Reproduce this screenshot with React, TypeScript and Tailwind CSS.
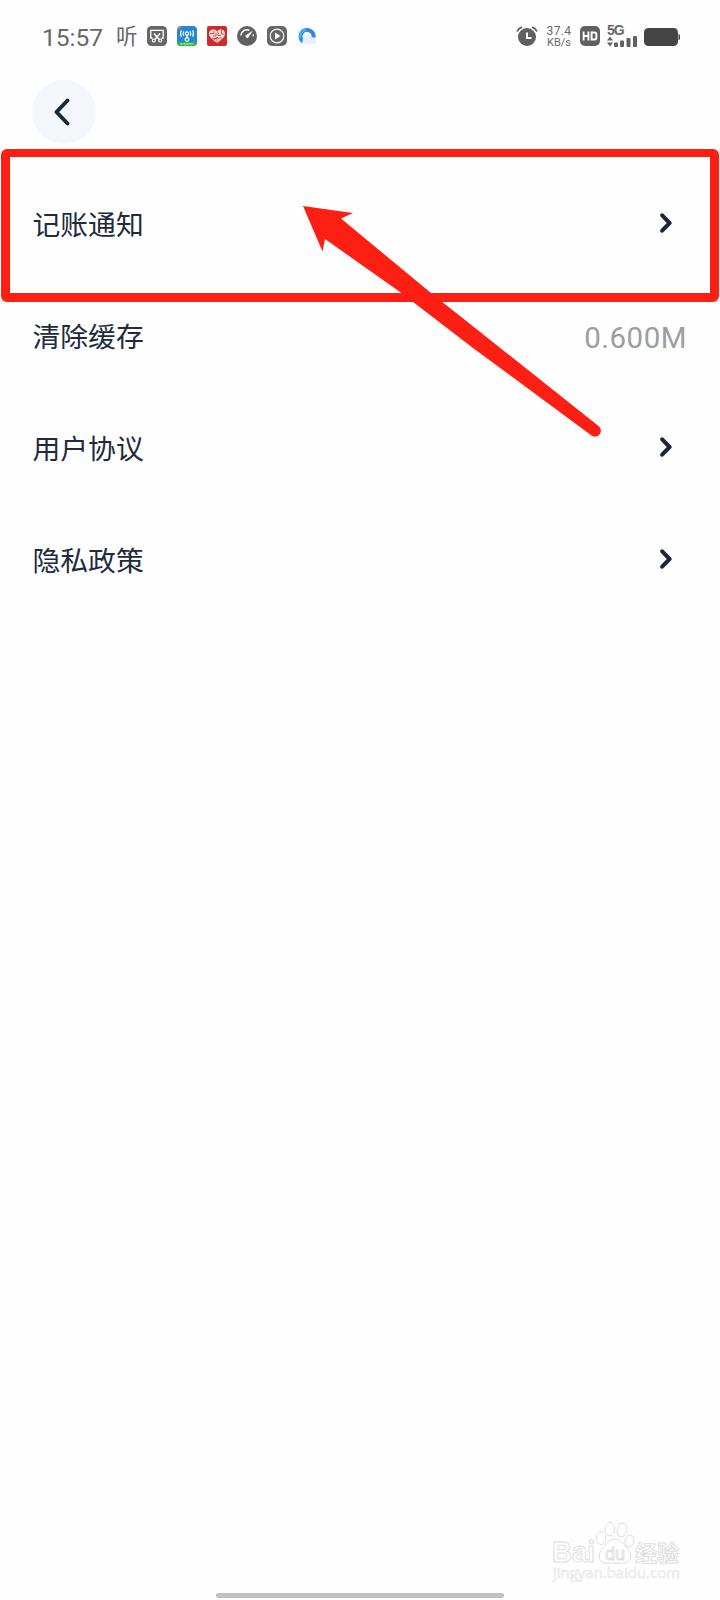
import type { ReactNode } from 'react';

interface SettingItem {
  label: string;
  value?: string;
}

const settings: SettingItem[] = [
  { label: '记账通知' },
  { label: '清除缓存', value: '0.600M' },
  { label: '用户协议' },
  { label: '隐私政策' },
];

function StatusIcon({ children }: { children: ReactNode }) {
  return (
    <svg className="w-5 h-5 shrink-0" viewBox="0 0 20 20" fill="none">
      {children}
    </svg>
  );
}

function StatusBar() {
  return (
    <div className="h-[72px] pl-[42px] pr-[39px] flex items-center justify-between text-[#686868]">
      <div className="flex items-center">
        <span className="w-[74px] text-[24.5px] leading-6 font-[Roboto,sans-serif] mt-[3px]">15:57</span>
        <span className="w-[31px] text-[21.5px] leading-5 font-['Noto_Sans_CJK_SC',sans-serif] -mt-[3px]">听</span>
        <div className="flex items-center gap-2.5">
          {/* Screenshot */}
          <StatusIcon>
            <rect width="20" height="20" rx="4.5" fill="#666" />
            <path d="M5.500 12H3.800V4.300h12.400V12h-1.700" stroke="#fff" strokeWidth="1.3" />
            <path d="M7 7.500l5.200 6M13 7.500l-5.200 6" stroke="#fff" strokeWidth="1.5" />
            <circle cx="6.800" cy="14.500" r="1.500" stroke="#fff" strokeWidth="1.2" />
            <circle cx="13.200" cy="14.500" r="1.500" stroke="#fff" strokeWidth="1.2" />
          </StatusIcon>
          {/* Wifi key */}
          <StatusIcon>
            <defs>
              <clipPath id="wifi-key">
                <rect width="20" height="20" rx="4" />
              </clipPath>
            </defs>
            <g clipPath="url(#wifi-key)">
              <rect width="20" height="20" fill="#2688d4" />
              <rect y="15.8" width="20" height="4.2" fill="#35b44a" />
              <path d="M0 0h5L0 4z" fill="#d98a8a" />
            </g>
            <circle cx="10" cy="7.5" r="1.7" stroke="#fff" strokeWidth="1.2" />
            <path d="M10 9.2v3" stroke="#fff" strokeWidth="1.3" />
            <circle cx="10" cy="13.5" r="1.8" stroke="#fff" strokeWidth="1.2" />
            <path d="M6.8 5.2q-1.3 2.3 0 4.6M13.2 5.2q1.3 2.3 0 4.6M4.4 4.3q-1.8 3.2 0 6.4M15.6 4.3q1.8 3.2 0 6.4" stroke="#fff" strokeWidth="1.1" />
            <path d="M3.5 18h13" stroke="#b9ebbb" strokeWidth="1.3" strokeDasharray="2 1" />
          </StatusIcon>
          {/* Heart */}
          <StatusIcon>
            <rect width="20" height="20" rx="2" fill="#cd2c2c" />
            <path d="M10 16.7C4.5 13 2 10.6 2 7.4 2 3 8 2.4 10 5.4 12 2.4 18 3 18 7.4c0 3.2-2.5 5.6-8 9.3z" fill="#f8dddd" />
            <path d="M3 7.5h4V5M6 10h3V7M5 12.5h5v3M11 5.5v4h3M12 12h3M14.5 4v4h3M7 14l3-3 2 2" stroke="#cd2c2c" strokeWidth=".8" />
          </StatusIcon>
          {/* Gauge */}
          <StatusIcon>
            <circle cx="10" cy="10" r="10" fill="#606060" />
            <path d="M3.8 9.5A6.3 6.3 0 0 1 12.5 4.2" stroke="#fff" strokeWidth="1.5" />
            <path d="M16 4.5L11.3 11.6A1.8 1.8 0 0 1 8.6 9.4z" fill="#fff" />
            <path d="M16.2 8v2.5" stroke="#fff" strokeWidth="1" />
          </StatusIcon>
          {/* Player */}
          <StatusIcon>
            <rect width="20" height="20" rx="5" fill="#666" />
            <circle cx="10" cy="10" r="6.8" stroke="#fff" strokeWidth="1.2" />
            <path d="M8 6.5v7l5.5-3.5z" fill="#fff" />
          </StatusIcon>
          {/* Browser */}
          <StatusIcon>
            <rect x="1" y="1" width="18" height="18" rx="3" fill="#f4f8fe" />
            <path d="M6 15.500A6.500 6.500 0 1 1 16.500 11.500" stroke="#2d86d9" strokeWidth="4" />
            <path d="M3.3 12A7 7 0 0 1 9 3.6" stroke="#3fb1ee" strokeWidth="2.4" />
            <path d="M8.500 17.500a3 3 0 0 1 0-6 4 4 0 0 1 7 .5 2.800 2.800 0 0 1 1 5.500z" fill="#e5eefc" />
          </StatusIcon>
        </div>
      </div>

      <div className="flex items-center">
        {/* Alarm */}
        <svg className="w-[22px] h-5" viewBox="0 0 22 20" fill="none">
          <circle cx="11" cy="11" r="9" fill="#606060" />
          <path d="M1 5.5Q2.5 2.2 6 1.2M21 5.5Q19.5 2.2 16 1.2" stroke="#606060" strokeWidth="1.8" />
          <path d="M11 6.5V12h4.5" stroke="#fff" strokeWidth="2" />
        </svg>
        <div className="w-[42px] pt-px flex flex-col items-center font-[Roboto,sans-serif]">
          <span className="h-3 text-[12px] leading-3 tracking-[0.4px]">37.4</span>
          <span className="h-3 text-[11px] leading-3">KB/s</span>
        </div>
        {/* HD */}
        <StatusIcon>
          <rect width="20" height="20" rx="5" fill="#606060" />
          <path d="M3.6 5.500v9M8.400 5.500v9M3.600 10h4.800M11.600 6.500v7h2.800q2 0 2-2v-3q0-2-2-2z" stroke="#fff" strokeWidth="1.9" />
        </StatusIcon>
        <div className="w-[30px] h-[22px] ml-[7px] flex flex-col">
          <span className="h-[11px] text-[14px] leading-[11px] font-bold tracking-[-1px] font-['Liberation_Sans',sans-serif]">5G</span>
          <svg className="w-[30px] h-[11px]" viewBox="0 0 30 11" fill="#606060">
            <path d="M0 4.5L3 .5l3 4zM0 6.500l3 4 3-4z" />
            <rect x="7" y="6.5" width="4" height="4.500" rx="1" />
            <rect x="13" y="4.5" width="4" height="6.500" rx="1" />
            <rect x="19.5" y="2" width="4" height="9" rx="1" />
            <rect x="26" y="0" width="4" height="11" rx="1" />
          </svg>
        </div>
        {/* Battery */}
        <svg className="w-[37px] h-[18px] ml-[7px] mt-px" viewBox="0 0 37 18" fill="#444">
          <rect width="34" height="18" rx="4.5" />
          <path d="M34.5 6q1.5 0 1.5 1.5v3q0 1.5-1.5 1.5z" />
        </svg>
      </div>
    </div>
  );
}

function SettingRow({ label, value }: SettingItem) {
  return (
    <div className="h-28 pl-[32.5px] pr-[33px] flex items-center justify-between">
      <span className="mb-1 text-[27.8px] leading-10 text-[#202b3b] font-['Noto_Sans_CJK_SC',sans-serif]">{label}</span>
      {value ? (
        <span className="mt-0.5 text-[29.5px] leading-10 tracking-[0.5px] text-[#9b9ea3] font-[Roboto,sans-serif]">{value}</span>
      ) : (
        <svg className="w-3 h-5 mr-[15.5px] mb-[5px]" viewBox="0 0 12 20" fill="none">
          <path d="M2.2 2.3L9.6 10l-7.4 7.700" stroke="#182838" strokeWidth="4" strokeLinecap="round" strokeLinejoin="round" />
        </svg>
      )}
    </div>
  );
}

function Watermark() {
  return (
    <svg
      className="absolute left-[548px] top-[1518px] w-[140px] h-[68px]"
      viewBox="0 0 140 68"
      fill="#fff"
      stroke="#dedede"
      strokeWidth="1"
    >
      <text x="4" y="44" fontSize="29" fontWeight="bold" textLength="43" lengthAdjust="spacingAndGlyphs" fontFamily="Liberation Sans, sans-serif">Bai</text>
      <ellipse cx="53" cy="20" rx="4.8" ry="6.5" />
      <ellipse cx="62" cy="11" rx="4.8" ry="6.8" />
      <ellipse cx="74" cy="12" rx="4.8" ry="6.8" transform="rotate(12 74 12)" />
      <ellipse cx="81.5" cy="23" rx="4.5" ry="6" transform="rotate(15 81.5 23)" />
      <path d="M67 21c6 0 7.5 4 11 8 4 4 5.5 7 4.5 11-1.2 5.5-6 5.5-15.5 5-9.5.5-14.5.5-15.5-5-.8-4 .5-7 4.5-11 3.5-4 5-8 11-8z" />
      <text x="57" y="42" fontSize="19" textLength="20" lengthAdjust="spacingAndGlyphs" fontFamily="Liberation Sans, sans-serif">du</text>
      <text x="87" y="43" fontSize="22" fontWeight="bold" textLength="44" lengthAdjust="spacingAndGlyphs" fontFamily="Noto Sans CJK SC, sans-serif">经验</text>
      <text x="5" y="60" fontSize="15" stroke="#e8e8e8" strokeWidth=".7" textLength="127" lengthAdjust="spacingAndGlyphs" fontFamily="Open Sans, sans-serif">jingyan.baidu.com</text>
    </svg>
  );
}

export default function App() {
  return (
    <div className="relative w-[720px] h-[1600px] bg-[#fefefe] overflow-hidden flex flex-col">
      <StatusBar />

      <div className="h-[97px] pt-2 pl-8">
        <button className="w-16 h-16 rounded-full bg-[#f4f8fc] flex items-center justify-center">
          <svg className="w-4 h-7 mr-1" viewBox="0 0 16 28" fill="none">
            <path d="M13.5 2.5L2.5 14l11 11.5" stroke="#182838" strokeWidth="3.9" strokeLinecap="round" strokeLinejoin="round" />
          </svg>
        </button>
      </div>

      <div className="flex-1">
        {settings.map((item) => (
          <SettingRow key={item.label} {...item} />
        ))}
      </div>

      {/* Home indicator */}
      <div className="mx-auto mb-0.5 w-72 h-[5px] rounded-full bg-[#c1c1c1]" />

      {/* Highlight box and pointer */}
      <div className="absolute left-[1px] top-[149px] w-[718px] h-[153px] border-[#fd1f13] border-x-9 border-t-8 border-b-9 rounded-[6px]" />
      <svg className="absolute left-[300px] top-[200px] w-[304px] h-60" viewBox="0 0 304 240" fill="#fd1f13">
        <path d="M3 6L53 13 41 18.5 131 93l46 36.5 121.5 96.5a5.8 5.8 0 0 1-7 9.5L173 148 100 92 25 39l-2.5 12.5z" />
      </svg>

      <Watermark />
    </div>
  );
}
